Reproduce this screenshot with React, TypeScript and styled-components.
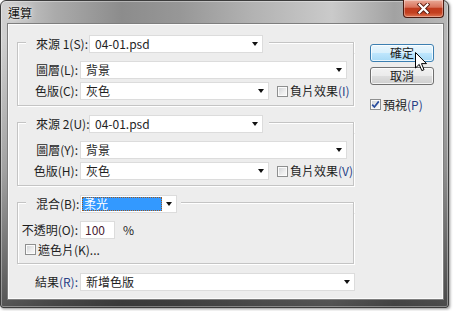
import React from "react";
import styled, { createGlobalStyle } from "styled-components";

const ETCH = "#c4c4c4";

const Global = createGlobalStyle`
  html, body { margin: 0; padding: 0; background: #ffffff; }
  body {
    width: 454px; height: 311px; overflow: hidden;
    font-family: "Noto Sans CJK TC", "Noto Sans", sans-serif;
    font-size: 12px; color: #1e1e1e;
  }
`;

const Window = styled.div`
  box-sizing: border-box;
  width: 449px;
  height: 308px;
  display: flex;
  flex-direction: column;
  border: 1px solid #3c3c3c;
  border-radius: 6px 6px 3px 3px;
  padding: 0 5px 8px 7px;
  background:
    linear-gradient(180deg, rgba(0,0,0,0) 0%, rgba(0,0,0,0) 12%, rgba(0,0,0,0.22) 55%, rgba(0,0,0,0.6) 100%),
    linear-gradient(90deg, #d2d2d2 0%, #ababab 12%, #8c8c8c 27%, #979797 40%, #b2b2b2 56%, #cacaca 74%, #a2a2a2 88%, #b8b8b8 100%);
  box-shadow: inset 0 0 0 1px rgba(255,255,255,0.35), 1px 1px 3px rgba(0,0,0,0.45);
`;

const TitleBar = styled.div`
  display: flex;
  align-items: flex-start;
  height: 23px;
  margin: 0 -5px 0 -7px;
  padding-left: 7px;
`;

const Title = styled.span`
  margin-top: 5px;
  font-size: 12px;
  line-height: 14px;
  color: #111;
  text-shadow: 0 0 6px rgba(255,255,255,0.9), 0 0 2px rgba(255,255,255,0.8);
`;

const CloseBtn = styled.div`
  box-sizing: border-box;
  margin-left: auto;
  margin-right: 4px;
  margin-top: -1px;
  width: 41px;
  height: 18px;
  display: flex;
  align-items: center;
  justify-content: center;
  border: 1px solid #4a1a10;
  border-top: none;
  border-radius: 0 0 4px 4px;
  background: linear-gradient(180deg, #e9a897 0%, #d9735c 42%, #c03a1e 50%, #c3401f 75%, #df7452 100%);
  box-shadow: inset 0 0 0 1px rgba(255,255,255,0.35);
`;

const Client = styled.div`
  box-sizing: border-box;
  flex: 1;
  display: grid;
  grid-template-columns: 338px 64px;
  column-gap: 15px;
  align-items: start;
  padding: 10px 0 0 8px;
  background: #ededed;
  border: 1px solid #fbfbfb;
  box-shadow: 0 0 0 1px #7e7e7e;
`;

const LeftCol = styled.div`
  display: flex;
  flex-direction: column;
  gap: 9px;
`;

const RightCol = styled.div`
  position: relative;
  margin-top: 9px;
  display: flex;
  flex-direction: column;
  gap: 5px;
`;

const Group = styled.div`
  display: flex;
  flex-direction: column;
  width: 337px;
`;

const GroupHead = styled.div`
  display: flex;
  height: 18px;
`;

const CornerLeft = styled.div`
  box-sizing: border-box;
  width: 9px;
  height: 11px;
  align-self: flex-end;
  border-top: 1px solid ${ETCH};
  border-left: 1px solid ${ETCH};
  box-shadow: inset 1px 1px 0 #fff;
`;

const CornerRight = styled.div<{ $gap: number }>`
  box-sizing: border-box;
  flex: 1;
  height: 11px;
  align-self: flex-end;
  margin-left: ${(p) => p.$gap}px;
  border-top: 1px solid ${ETCH};
  border-right: 1px solid ${ETCH};
  box-shadow: inset 0 1px 0 #fff, 1px 0 0 #fff;
`;

const HeadLabel = styled.div<{ $w: number }>`
  box-sizing: border-box;
  width: ${(p) => p.$w}px;
  padding-left: 10px;
  display: flex;
  align-items: center;
  line-height: 14px;
  white-space: nowrap;
`;

const GroupBody = styled.div<{ $gap: number; $pb: number }>`
  display: flex;
  flex-direction: column;
  gap: ${(p) => p.$gap}px;
  padding: 8px 0 ${(p) => p.$pb}px;
  border: 1px solid ${ETCH};
  border-top: none;
  box-shadow: inset 1px 0 0 #fff, 1px 1px 0 #fff;
`;

const Row = styled.div<{ $indent?: number }>`
  display: flex;
  align-items: center;
  height: 18px;
  padding-left: ${(p) => p.$indent ?? 0}px;
`;

const Label = styled.span`
  width: 60px;
  margin-right: 2px;
  text-align: right;
  line-height: 14px;
  white-space: nowrap;
`;

const Mn = styled.span`
  color: #283f86;
`;

const SelectBox = styled.div<{ $w: number; $pad?: number }>`
  box-sizing: border-box;
  width: ${(p) => p.$w}px;
  height: 18px;
  flex: none;
  display: flex;
  align-items: center;
  background: #fff;
  border: 1px solid #dcdcdc;
  padding-left: ${(p) => p.$pad ?? 5}px;
  line-height: 14px;
  white-space: nowrap;
`;

const Arrow = styled.span`
  margin-left: auto;
  margin-right: 4px;
  width: 0;
  height: 0;
  border-left: 3px solid transparent;
  border-right: 3px solid transparent;
  border-top: 4px solid #111;
`;

const Highlight = styled.span`
  box-sizing: border-box;
  width: 80px;
  height: 14px;
  margin-left: 1px;
  padding-left: 2px;
  display: flex;
  align-items: center;
  background: #3399ff;
  color: #fff;
  outline: 1px dotted #9a5a24;
  outline-offset: -1px;
`;

const NumInput = styled.div`
  box-sizing: border-box;
  width: 35px;
  height: 18px;
  display: flex;
  align-items: center;
  padding-left: 4px;
  background: #fff;
  border: 1px solid #dcdcdc;
  color: #4a2232;
  line-height: 14px;
`;

const Unit = styled.span`
  margin-left: 8px;
  line-height: 14px;
`;

const CheckRow = styled.label<{ $ml?: number; $indent?: number }>`
  display: flex;
  align-items: center;
  gap: 2px;
  height: 13px;
  margin-left: ${(p) => p.$ml ?? 0}px;
  padding-left: ${(p) => p.$indent ?? 0}px;
  line-height: 14px;
  white-space: nowrap;
`;

const Box = styled.span`
  box-sizing: border-box;
  width: 11px;
  height: 11px;
  flex: none;
  display: flex;
  align-items: center;
  justify-content: center;
  border: 1px solid #8e8f8f;
  background: linear-gradient(135deg, #cdd0d4 0%, #eeeeee 60%, #fafafa 100%);
  box-shadow: inset 0 0 0 1px #fbfbfb;
`;

const Button = styled.div<{ $hot?: boolean }>`
  box-sizing: border-box;
  width: 64px;
  height: 18px;
  display: flex;
  align-items: center;
  justify-content: center;
  border-radius: 3px;
  line-height: 14px;
  border: 1px solid ${(p) => (p.$hot ? "#3c7fb1" : "#707070")};
  background: ${(p) =>
    p.$hot
      ? "linear-gradient(180deg, #eaf6fd 0%, #d9f0fc 48%, #bee6fd 52%, #a7d9f5 100%)"
      : "linear-gradient(180deg, #f2f2f2 0%, #ebebeb 48%, #dddddd 52%, #cfcfcf 100%)"};
  box-shadow: inset 0 0 0 1px rgba(255, 255, 255, 0.75);
`;

const PreviewRow = styled(CheckRow)`
  margin-top: 9px;
  height: 11px;
`;

const Cursor = styled.svg`
  position: absolute;
  left: 45px;
  top: 8px;
`;

function Select({ w, value, pad }: { w: number; value: string; pad?: number }) {
  return (
    <SelectBox $w={w} $pad={pad}>
      <span>{value}</span>
      <Arrow />
    </SelectBox>
  );
}

function Check({ checked }: { checked?: boolean }) {
  return (
    <Box>
      {checked && (
        <svg width="9" height="9" viewBox="0 0 9 9">
          <path d="M1.2 4.6 L3.4 7 L7.8 1.4" fill="none" stroke="#2a4e9e" strokeWidth="1.7" />
        </svg>
      )}
    </Box>
  );
}

function SourceGroup({ n, src, layer, chan, inv }: { n: string; src: string; layer: string; chan: string; inv: string }) {
  return (
    <Group>
      <GroupHead>
        <CornerLeft />
        <HeadLabel $w={63}>來源 {n}:</HeadLabel>
        <Select w={174} value="04-01.psd" />
        <CornerRight $gap={6} />
      </GroupHead>
      <GroupBody $gap={3} $pb={5}>
        <Row>
          <Label>{layer}</Label>
          <Select w={267} value="背景" />
        </Row>
        <Row>
          <Label>{chan}</Label>
          <Select w={189} value="灰色" />
          <CheckRow $ml={8}>
            <Check />
            <span>
              負片效果<Mn>{inv}</Mn>
            </span>
          </CheckRow>
        </Row>
      </GroupBody>
    </Group>
  );
}

export default function App() {
  return (
    <>
      <Global />
      <Window>
        <TitleBar>
          <Title>運算</Title>
          <CloseBtn>
            <svg width="13" height="11" viewBox="0 0 13 11">
              <path d="M2.5 1.5 L10.5 9.5 M10.5 1.5 L2.5 9.5" stroke="#5a1c10" strokeWidth="4" strokeLinecap="square" />
              <path d="M2.5 1.5 L10.5 9.5 M10.5 1.5 L2.5 9.5" stroke="#ffffff" strokeWidth="2.2" strokeLinecap="square" />
            </svg>
          </CloseBtn>
        </TitleBar>
        <Client>
          <LeftCol>
            <SourceGroup n="1(S)" src="04-01.psd" layer="圖層(L):" chan="色版(C):" inv="(I)" />
            <SourceGroup n="2(U)" src="04-01.psd" layer="圖層(Y):" chan="色版(H):" inv="(V)" />
            <Group>
              <GroupHead>
                <CornerLeft />
                <HeadLabel $w={54}>混合(B):</HeadLabel>
                <SelectBox $w={97} $pad={0}>
                  <Highlight>柔光</Highlight>
                  <Arrow />
                </SelectBox>
                <CornerRight $gap={4} />
              </GroupHead>
              <GroupBody $gap={4} $pb={7}>
                <Row>
                  <Label>不透明(O):</Label>
                  <NumInput>100</NumInput>
                  <Unit>%</Unit>
                </Row>
                <CheckRow $indent={7}>
                  <Check />
                  <span>遮色片(K)...</span>
                </CheckRow>
              </GroupBody>
            </Group>
            <Row $indent={1}>
              <Label>
                結果<Mn>(R):</Mn>
              </Label>
              <Select w={275} value="新增色版" />
            </Row>
          </LeftCol>
          <RightCol>
            <Button $hot>確定</Button>
            <Button>取消</Button>
            <PreviewRow>
              <Check checked />
              <span>
                預視<Mn>(P)</Mn>
              </span>
            </PreviewRow>
            <Cursor width="13" height="20" viewBox="0 0 13 20">
              <path
                d="M0.5 0.5 L0.5 16 L4.2 12.4 L6.8 18.6 L9 17.7 L6.5 11.6 L11.5 11.6 Z"
                fill="#ffffff"
                stroke="#000000"
                strokeWidth="1"
                strokeLinejoin="miter"
              />
            </Cursor>
          </RightCol>
        </Client>
      </Window>
    </>
  );
}
